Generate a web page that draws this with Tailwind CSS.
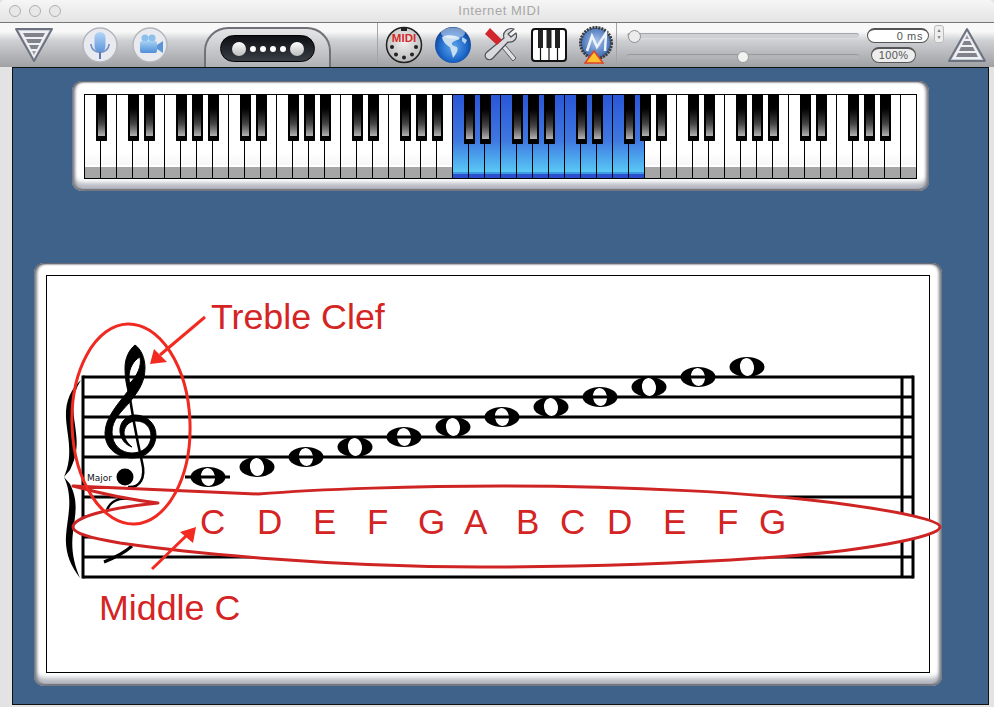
<!DOCTYPE html>
<html lang="en">
<head>
<meta charset="UTF-8">
<title>Internet MIDI</title>
<script src="https://cdn.jsdelivr.net/npm/@tailwindcss/browser@4"></script>
</head>
<body class="bg-[#e3e3e3] font-['Liberation_Sans',Arial,sans-serif]">
<div class="w-[994px] h-[707px] overflow-hidden flex flex-col bg-[#e3e3e3]">

  <!-- Title bar -->
  <div class="h-[23px] relative flex items-center justify-center pl-[5px] bg-gradient-to-b from-[#f6f6f6] to-[#e4e4e4] border-b border-[#777] rounded-t-[5px]">
    <div class="absolute left-[9px] top-[5px] flex gap-[8px]">
      <span class="w-[12px] h-[12px] rounded-full border border-[#b0b0b0] bg-[#e8e8e8]"></span>
      <span class="w-[12px] h-[12px] rounded-full border border-[#b0b0b0] bg-[#e8e8e8]"></span>
      <span class="w-[12px] h-[12px] rounded-full border border-[#b0b0b0] bg-[#e8e8e8]"></span>
    </div>
    <span class="text-[13px] tracking-[0.55px] text-[#a8a8a8]">Internet MIDI</span>
  </div>

  <!-- Toolbar -->
  <div class="h-[44px] flex items-stretch bg-gradient-to-b from-[#f8f8f8] from-20% via-[#cfd0d3] via-40% to-[#a0a1a5]">
    <!-- left section -->
    <div class="w-[378px] relative flex items-center border-r border-[#a4a4a4] shrink-0">
      <svg class="ml-[14px]" width="40" height="36" viewBox="0 0 40 36">
        <path d="M2 2 H38 L20 34 Z" fill="#c9ccd2" stroke="#6c7280" stroke-width="2" stroke-linejoin="round"/>
        <path d="M5 4 H35 L20 31 Z" fill="#eef0f3"/>
        <path d="M9 6 H31 L29 10 H11 Z M12 12 H28 L26 16 H14 Z M15 18 H25 L23 22 H17 Z" fill="#80838a"/>
        <path d="M18 24 H22 L20 28 Z" fill="#999ca2"/>
      </svg>
      <svg class="ml-[28px]" width="36" height="36" viewBox="0 0 36 36">
        <defs><linearGradient id="micFill" x1="0" y1="0" x2="0" y2="1"><stop offset="0" stop-color="#b4d6f6"/><stop offset="1" stop-color="#5f94dc"/></linearGradient></defs>
        <circle cx="18" cy="18" r="17" fill="#e8eaf0" stroke="#b4b6bc" stroke-width="1.500"/>
        <rect x="12.500" y="5" width="11" height="20" rx="5.500" fill="url(#micFill)"/>
        <path d="M9 17 C9 28 27 28 27 17" fill="none" stroke="#6f8fc4" stroke-width="1.500"/>
        <path d="M18 25 V32" stroke="#5a78b4" stroke-width="2"/>
      </svg>
      <svg class="ml-[14px]" width="36" height="36" viewBox="0 0 36 36">
        <defs><linearGradient id="camFill" x1="0" y1="0" x2="0" y2="1"><stop offset="0" stop-color="#a6d2f4"/><stop offset="1" stop-color="#4f8ed8"/></linearGradient></defs>
        <circle cx="18" cy="18" r="17" fill="#e8eaf0" stroke="#b4b6bc" stroke-width="1.500"/>
        <circle cx="13" cy="11" r="3.600" fill="#8cc0ec"/>
        <circle cx="20" cy="11" r="3.600" fill="#8cc0ec"/>
        <rect x="8" y="14" width="17" height="12" rx="2" fill="url(#camFill)"/>
        <path d="M25 18 L31 14 V26 L25 22 Z" fill="#5c96d6"/>
      </svg>
      <div class="absolute left-[204px] top-[4px] w-[127px] h-[40px] rounded-t-[24px] border-t-[2px] border-x-[2px] border-[#6f7176] bg-gradient-to-b from-[#e6e6e8] to-[#b0b1b5] flex items-start justify-center pt-[6px]">
        <div class="w-[95px] h-[27px] rounded-full bg-gradient-to-b from-[#0e1014] to-[#3a3e46] border border-black flex items-center justify-center gap-[4px]">
          <span class="w-[14px] h-[14px] rounded-full bg-gradient-to-b from-white to-[#bdbdbd]"></span>
          <span class="w-[6px] h-[6px] rounded-full bg-white"></span>
          <span class="w-[6px] h-[6px] rounded-full bg-white"></span>
          <span class="w-[6px] h-[6px] rounded-full bg-white"></span>
          <span class="w-[6px] h-[6px] rounded-full bg-white"></span>
          <span class="w-[14px] h-[14px] rounded-full bg-gradient-to-b from-white to-[#bdbdbd]"></span>
        </div>
      </div>
    </div>

    <!-- icons -->
    <div class="w-[239px] flex items-center pl-[7px] border-r border-[#a4a4a4] shrink-0">
      <svg width="38" height="38" viewBox="0 0 38 38">
        <defs><radialGradient id="din" cx="0.5" cy="0.4" r="0.6"><stop offset="0" stop-color="#f2f2f2"/><stop offset="1" stop-color="#b8b8ba"/></radialGradient></defs>
        <circle cx="19" cy="19" r="17.500" fill="url(#din)" stroke="#222" stroke-width="1.500"/>
        <rect x="16" y="1" width="6" height="4" fill="#222"/>
        <text x="19" y="16" text-anchor="middle" font-size="11.500" font-weight="700" fill="#d42a2a" font-family="'Liberation Sans',Arial,sans-serif">MIDI</text>
        <circle cx="7" cy="21" r="2" fill="#222"/><circle cx="31" cy="21" r="2" fill="#222"/>
        <circle cx="11" cy="28.500" r="2" fill="#222"/><circle cx="27" cy="28.500" r="2" fill="#222"/>
        <circle cx="19" cy="31.500" r="2" fill="#222"/>
      </svg>
      <svg class="ml-[11px]" width="38" height="38" viewBox="0 0 38 38">
        <defs><radialGradient id="globe" cx="0.5" cy="0.55" r="0.6"><stop offset="0" stop-color="#5ea8ee"/><stop offset="0.65" stop-color="#1c66c8"/><stop offset="1" stop-color="#0c3478"/></radialGradient></defs>
        <circle cx="19" cy="19" r="18" fill="url(#globe)"/>
        <path d="M8 11 C13 8 22 9 26 12 C24 15 20 14 18 17 C17 20 21 20 23 21 C25 24 22 28 19 32 C18 28 17 24 16 21 C12 19 9 16 8 11 Z" fill="#c8deee"/>
        <path d="M28 11 L33 14 L31 18 L28 15 Z" fill="#b6d2ea"/>
        <ellipse cx="19" cy="7" rx="12" ry="5.500" fill="#fff" fill-opacity="0.45"/>
      </svg>
      <svg class="ml-[11px]" width="34" height="36" viewBox="0 0 34 36">
        <path d="M14 15 L17 12 L33 31 L30 34 Z" fill="#dfe0e4" stroke="#55575c" stroke-width="1"/>
        <path d="M31 2 C25 0 19 5 21 11 L4 25 C-1 29 5 36 10 31 L25 15 C31 16 35 11 33 6 L28 10 L25 7 Z" fill="#d8dade" stroke="#4f5156" stroke-width="1.200" stroke-linejoin="round"/>
        <path d="M2 7 L7 1 L19 13 L14 18 Z" fill="#d0262c"/>
      </svg>
      <svg class="ml-[14px]" width="36" height="34" viewBox="0 0 36 34">
        <rect x="1" y="1" width="34" height="32" rx="3" fill="#fff" stroke="#111" stroke-width="2"/>
        <path d="M9.500 2 V32 M18 2 V32 M26.500 2 V32" stroke="#111" stroke-width="1.200"/>
        <rect x="7" y="2" width="5" height="18" fill="#222"/>
        <rect x="15.500" y="2" width="5" height="18" fill="#222"/>
        <rect x="24" y="2" width="5" height="18" fill="#222"/>
      </svg>
      <svg class="ml-[10px]" width="38" height="38" viewBox="0 0 38 38">
        <defs><radialGradient id="dial" cx="0.5" cy="0.45" r="0.6"><stop offset="0" stop-color="#a8c4ec"/><stop offset="1" stop-color="#2f5ea8"/></radialGradient></defs>
        <circle cx="19" cy="17" r="15.500" fill="url(#dial)" stroke="#3a3a3c" stroke-width="3" stroke-dasharray="2 1"/>
        <path d="M10 25 L15 10 L20 21 L29 7 L28 25" fill="none" stroke="#eef3fa" stroke-width="2.500"/>
        <path d="M17 25 L26 37 H8 Z" fill="#ffc22e" stroke="#e0402a" stroke-width="1.500"/>
      </svg>
    </div>

    <!-- sliders -->
    <div class="flex-1 relative">
      <div class="absolute left-[10px] top-[10px] w-[232px] h-[5px] rounded-full bg-[#cfd0d3] border-t border-[#a6a7aa]"></div>
      <span class="absolute left-[11px] top-[7px] w-[13px] h-[13px] rounded-full bg-[#ececec] border border-[#8e8e90]"></span>
      <div class="absolute left-[10px] top-[31px] w-[232px] h-[5px] rounded-full bg-[#b4b5b8] border-t border-[#98999c]"></div>
      <span class="absolute left-[120px] top-[28px] w-[12px] h-[12px] rounded-full bg-[#f2f2f2] border border-[#9a9a9c]"></span>
      <div class="absolute left-[250px] top-[5px] w-[62px] h-[15px] rounded-full bg-white border border-t-2 border-[#555] flex items-center justify-end pr-[5px] text-[11px] tracking-[0.6px] text-[#555]">0 ms</div>
      <div class="absolute left-[317px] top-[2px] w-[10px] h-[18px] rounded-[3px] border border-[#bbb] bg-[#eee] flex flex-col items-center justify-center text-[5px] leading-[7px] text-[#777]"><span>▲</span><span>▼</span></div>
      <div class="absolute left-[254px] top-[24px] w-[45px] h-[16px] rounded-full bg-[#eeeeee] border border-t-2 border-[#555] flex items-center justify-center text-[11px] tracking-[0.4px] text-[#555]">100%</div>
      <svg class="absolute left-[330px] top-[4px]" width="40" height="36" viewBox="0 0 40 36">
        <path d="M20 2 L38 34 H2 Z" fill="#c9ccd2" stroke="#6c7280" stroke-width="2" stroke-linejoin="round"/>
        <path d="M20 5 L35 32 H5 Z" fill="#eef0f3"/>
        <path d="M11 26 H29 L31 30 H9 Z M14 20 H26 L28 24 H12 Z M17 14 H23 L25 18 H15 Z" fill="#80838a"/>
        <path d="M20 8 L22 12 H18 Z" fill="#999ca2"/>
      </svg>
    </div>
  </div>

  <!-- Main blue area -->
  <div class="ml-[12px] mr-[5px] h-[638px] bg-[#3f628a] border border-[#111] pt-[13px] flex flex-col items-start">
    <!-- Keyboard panel -->
    <div class="ml-[59px] w-[857px] h-[110px] rounded-[10px] px-[12px] pt-[13px] bg-white shadow-[inset_0_1px_2px_#4f5159,inset_3px_0_3px_#85878f,inset_-3px_0_3px_#85878f,inset_0_-2px_1px_#6b6d76,inset_0_-8px_5px_#b4b7c0]">
      <div id="keyboard" class="relative w-[833px] h-[85px] flex border-y border-l border-black bg-white"></div>
    </div>

    <!-- Score panel -->
    <div class="ml-[21px] mt-[72px] w-[908px] h-[423px] rounded-[10px] p-[12px] bg-white shadow-[inset_0_1px_2px_#4f5159,inset_3px_0_3px_#85878f,inset_-3px_0_3px_#85878f,inset_0_-2px_1px_#6b6d76,inset_0_-8px_5px_#b4b7c0]">
      <div class="relative w-[884px] h-[398px] bg-white border border-black">
        <!-- viewBox keeps the drawing in page coordinates -->
        <svg class="absolute left-0 top-0 overflow-visible" width="884" height="398" viewBox="47 276 884 398">
          <!-- staff -->
          <g stroke="#000" stroke-width="3">
            <path d="M83 377 H913 M83 397 H913 M83 417 H913 M83 437 H913 M83 457 H913 M83 497 H913 M83 517 H913 M83 537 H913 M83 557 H913 M83 577 H913"/>
            <path d="M83 375.500 V578.500 M902 377 V577 M913 375.500 V578.500"/>
          </g>
          <!-- brace -->
          <path d="M81 380 C72 388 65 400 66 418 C67 436 74 455 64 477 L70 470 C79 452 77 440 75 425 C73 410 71 395 81 380 Z" fill="#000"/>
          <path d="M64 477 C74 499 67 518 66 536 C65 552 70 565 80 578 C73 562 71 548 73 532 C75 515 79 502 70 484 Z" fill="#000"/>
          <!-- treble clef -->
          <path d="M135 345 C141 349 145 358 145 368 C145 384 136 394 129 403 C121 412 112 420 112 432 C112 445 121 453 132 453 C143 453 151 446 151 436 C151 427 145 421 136 421 C130 421 125 425 124 432 C124 438 127 443 132 447 C126 445 121 440 120 432 C119 423 126 415 135 415 C146 415 156 423 156 435 C156 447 147 458 133 458 C118 458 105 449 105 433 C105 418 118 404 128 391 C126 384 125 376 125 368 C125 358 129 350 135 345 Z M140 357 C134 360 129 368 129 377 C129 379 129 381 130 383 C137 376 142 366 140 357 Z" fill="#000" fill-rule="evenodd" stroke="#000" stroke-width="1"/>
          <path d="M127 378 C130 400 137 440 142 462 C146 478 140 488 128 487" fill="none" stroke="#000" stroke-width="2.500"/>
          <circle cx="125" cy="477" r="8.500" fill="#000"/>
          <text x="87" y="481" font-size="9" fill="#111" font-family="'DejaVu Sans',sans-serif">Major</text>
          <!-- bass clef remains -->
          <path d="M104 562 C114 558 124 553 132 546" fill="none" stroke="#000" stroke-width="3"/>
          <path d="M107 510 C110 502 118 497 130 499" fill="none" stroke="#000" stroke-width="2.500"/>

          <!-- notes -->
          <path d="M185 477 H230" stroke="#000" stroke-width="3"/>
          <g id="notes"></g>

          <!-- white callout balloon with red outline -->
          <path d="M73 486 C110 488 180 491 258 494 C320 489 420 486 500 486 C620 486 760 492 850 505 C900 512 940 520 940 527 C940 537 860 552 760 558 C660 565 560 567 480 567 C330 567 190 553 120 543 C90 538 73 533 73 527 C73 518 105 508 158 503 C125 499 95 492 73 486 Z" fill="#fff" stroke="#cf2424" stroke-width="3" stroke-linejoin="round"/>
          <!-- treble ellipse -->
          <ellipse cx="131" cy="424" rx="59" ry="100" fill="none" stroke="#f02a20" stroke-width="3" transform="rotate(-2 131 424)"/>
          <!-- arrows -->
          <path d="M205 317 L160 355" stroke="#f22a20" stroke-width="3"/>
          <path d="M150 364 L154 349 L167 362 Z" fill="#f22a20"/>
          <path d="M152 569 L186 536" stroke="#f22a20" stroke-width="3"/>
          <path d="M196 527 L180 532 L193 543 Z" fill="#f22a20"/>
          <!-- labels -->
          <g fill="#d42424" font-family="'Liberation Sans',Arial,sans-serif">
            <text x="211" y="329" font-size="35.800">Treble Clef</text>
            <text x="99" y="620" font-size="35.800">Middle C</text>
            <g font-size="35">
              <text x="200" y="534">C</text><text x="257" y="534">D</text><text x="313" y="534">E</text>
              <text x="367" y="534">F</text><text x="418" y="534">G</text><text x="464" y="534">A</text>
              <text x="516" y="534">B</text><text x="560" y="534">C</text><text x="607" y="534">D</text>
              <text x="663" y="534">E</text><text x="717" y="534">F</text><text x="759" y="534">G</text>
            </g>
          </g>
        </svg>
      </div>
    </div>
  </div>
</div>

<script>
  // 88 key piano: 52 white keys, C4..G5 are lit
  var kb = document.getElementById('keyboard');
  var hasBlack = [1, 0, 1, 1, 0, 1, 1];
  for (var i = 0; i < 52; i++) {
    var lit = i >= 23 && i <= 34;
    var key = document.createElement('div');
    key.className = 'w-[16px] h-[83px] shrink-0 border-r border-black flex flex-col justify-end ' +
      (lit ? 'bg-gradient-to-b from-[#2a56d6] via-[#3f78e0] via-55% to-[#62d8f8]' : 'bg-gradient-to-b from-white from-70% to-[#ececec]');
    var lip = document.createElement('div');
    lip.className = lit ? 'h-[6px] bg-gradient-to-b from-[#3f9ae2] from-30% to-[#2c4fd0] to-30%' : 'h-[13px] border-t-2 border-white bg-[#a6a6a6]';
    key.appendChild(lip);
    kb.appendChild(key);
  }
  for (var j = 0; j < 51; j++) {
    if (!hasBlack[j % 7]) continue;
    var pressed = j >= 23 && j <= 33;
    var black = document.createElement('div');
    black.className = 'absolute top-0 w-[11px] rounded-b-[1px] bg-gradient-to-b from-black from-20% via-[#444] via-70% to-[#b4b4b4] border-x-2 border-b-[5px] border-black ' + (pressed ? 'h-[49px]' : 'h-[46px]');
    black.style.left = (16 * (j + 1) - 5.5) + 'px';
    kb.appendChild(black);
  }

  // whole notes rising by a step from middle C
  var notes = document.getElementById('notes');
  var NS = 'http://www.w3.org/2000/svg';
  for (var n = 0; n < 12; n++) {
    var cx = 208 + n * 49, cy = 477 - n * 10;
    var head = document.createElementNS(NS, 'ellipse');
    head.setAttribute('cx', cx); head.setAttribute('cy', cy);
    head.setAttribute('rx', 17.5); head.setAttribute('ry', 10);
    head.setAttribute('fill', '#000');
    notes.appendChild(head);
    var hole = document.createElementNS(NS, 'ellipse');
    hole.setAttribute('cx', cx); hole.setAttribute('cy', cy);
    hole.setAttribute('rx', 7); hole.setAttribute('ry', 9);
    hole.setAttribute('fill', '#fff');
    hole.setAttribute('transform', 'rotate(-10 ' + cx + ' ' + cy + ')');
    notes.appendChild(hole);
    if (n % 2 === 0) {
      var bar = document.createElementNS(NS, 'path');
      bar.setAttribute('d', 'M' + (cx - 14) + ' ' + cy + ' H' + (cx + 14));
      bar.setAttribute('stroke', '#000'); bar.setAttribute('stroke-width', '3');
      notes.appendChild(bar);
    }
  }
</script>
</body>
</html>
